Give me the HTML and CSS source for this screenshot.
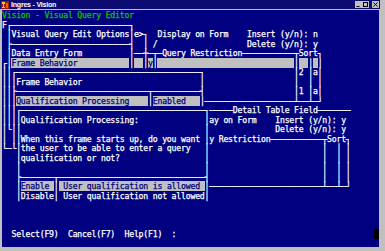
FILE: index.html
```html
<!DOCTYPE html>
<html>

<head>
	<title>Ingres - Vision</title>
	<link rel="stylesheet" href="styles.css">
</head>

<body>
	<div class="window">
		<div class="titlebar">
			<svg class="app-icon" width="8" height="8" viewBox="0 0 8 8">
				<rect x="0" y="0" width="8" height="8" fill="#a01808"/>
				<path d="M1 1h3v2h-1v3h1v1h-3v-1h1v-3h-1z" fill="#f8d020"/>
				<path d="M5 2h2v5h-2z" fill="#e86020"/>
			</svg>
			<span class="title">Ingres - Vision</span>
			<div class="controls">
				<span class="btn"><svg width="7" height="7" viewBox="0 0 7 7"><path d="M1.5 5.5h3" stroke="#000" stroke-width="1"/></svg></span>
				<span class="btn"><svg width="7" height="7" viewBox="0 0 7 7"><rect x="1.5" y="1.5" width="4" height="4" fill="none" stroke="#000" stroke-width="1"/></svg></span>
				<span class="btn close"><svg width="7" height="7" viewBox="0 0 7 7"><path d="M1.5 1.5l4 4M5.5 1.5l-4 4" stroke="#000" stroke-width="1"/></svg></span>
			</div>
		</div>
		<div class="screen">
<pre class="term">
<span class="green">Vision - Visual Query Editor</span>
F┌─────────────────────────┐
 │Visual Query Edit Options│e>┐  Display on Form    Insert (y/n): n
 ├─────────────────────────┤  │ /                   Delete (y/n): y
 │Data Entry Form          │──┼─┬─Query Restriction───────────┬Sort┐
┌│<span class="fld">Frame Behavior           </span>│<span class="fld">  </span>│<span class="fld">y</span>│<span class="fld">                             </span>│<span class="fld">  </span>│<span class="fld"> </span>│
││┌───────────────────────────────────────┐                   │2 │a│
│││Frame Behavior                         │                   │  │ │
││├────────────────────────────┬──────────┤                   │1 │a│
│││<span class="fld">Qualification Processing    </span>│<span class="fld">Enabled   </span>│───────────────────┴──┴─┘
│││┌───────────────────────────────────────┐─────Detail Table Field───────
││││Qualification Processing:              │ay on Form    Insert (y/n): y
│└││                                       │              Delete (y/n): y
│ ││When this frame starts up, do you want │y Restriction───────────┬Sort┐
└─└│the user to be able to enter a query   │                        │  │ │
   │qualification or not?                  │                        │  │ │
   │                                       │                        │  │ │
   ├───────┬───────────────────────────────┤                        │  │ │
   │<span class="fld">Enable </span>│<span class="fld"> User qualification is allowed </span>│────────────────────────┴──┴─┘
   │Disable│ User qualification not allowed│



  Select(F9)  Cancel(F7)  Help(F1)  :                                          <span class="cursor"> </span></pre>
		</div>
	</div>
</body>

</html>
```

FILE: styles.css
```css
body {
	margin: 0;
	background: #c0c0c0;
}

.window {
	width: 385px;
	height: 251px;
	background: #c0c0c0;
	overflow: hidden;
}

.titlebar {
	display: flex;
	align-items: center;
	width: 380px;
	height: 9px;
	background: #0b0b72;
	color: #fff;
}

.app-icon {
	margin: 0 2px 0 1px;
}

.title {
	flex: 1;
	font-family: "Liberation Sans", sans-serif;
	font-weight: bold;
	font-size: 7px;
	letter-spacing: -0.2px;
	line-height: 9px;
}

.controls {
	display: flex;
	margin-right: 1px;
}

.btn {
	display: block;
	width: 7px;
	height: 7px;
	background: #c0c0c0;
}

.btn svg {
	display: block;
}

.btn.close {
	margin-left: 3px;
}

.screen {
	margin: 1px 0 0 2px;
	width: 377px;
	height: 237px;
	background: #000080;
	overflow: hidden;
}

.term {
	margin: 0;
	padding-top: 1px;
	font-family: "DejaVu Sans Mono", monospace;
	font-size: 8.16px;
	letter-spacing: -0.2px;
	line-height: 9.5px;
	color: #fff;
	-webkit-text-stroke: 0.25px currentColor;
	white-space: pre;
}

.green {
	color: #00c800;
}

.fld {
	background: #c0c0c0;
	color: #000080;
}

.cursor {
	background: #000;
}
```
